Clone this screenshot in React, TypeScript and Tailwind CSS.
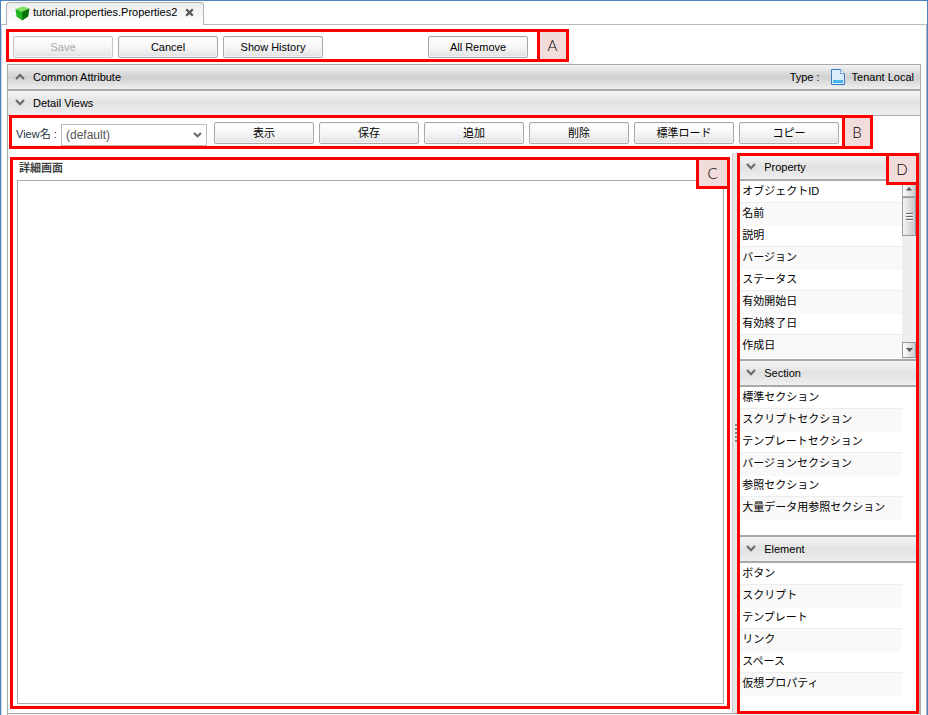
import React from "react";

const cjk = "font-['Liberation_Sans','Noto_Sans_CJK_JP',sans-serif]";

function Chevron({ up = false }: { up?: boolean }) {
  return (
    <svg width="10" height="8" viewBox="0 0 10 8" className="shrink-0" fill="none">
      <path d={up ? "M1 6 L5 2 L9 6" : "M1 1 L5 5.2 L9 1"} stroke="#6a6a6a" strokeWidth="2.2" />
    </svg>
  );
}

function Button({ label, disabled = false }: { label: string; disabled?: boolean }) {
  return (
    <button
      className={`h-[22px] w-[100px] shrink-0 rounded-[2px] border bg-linear-to-b from-white via-[#f6f6f6] to-[#e2e2e2] text-center text-[11px] leading-[20px] shadow-[inset_0_0_0_1px_#f4f4f4] ${
        disabled ? "border-[#c4c4c4] text-[#aaa]" : "border-[#a9a9a9] text-black"
      }`}
    >
      {label}
    </button>
  );
}

function Marker({ frame, tag, letter }: { frame: string; tag: string; letter: string }) {
  return (
    <div className={`pointer-events-none absolute border-3 border-[#f00] ${frame}`}>
      <div
        className={`absolute -top-[3px] -right-[3px] flex items-center justify-center border-3 border-[#f00] bg-[#f2dcdb] pr-px font-['Lato','Liberation_Sans',sans-serif] text-[15px] font-light text-black ${tag}`}
      >
        {letter}
      </div>
    </div>
  );
}

function List({ items }: { items: string[] }) {
  return (
    <ul className="w-[162px] shrink-0 pt-px">
      {items.map((item, i) => (
        <li
          key={item}
          className={`pl-[2px] text-[11px] whitespace-nowrap ${
            i % 2 ? "h-[24px] border-t border-[#ededed] bg-[#f9f9f9] leading-[21px]" : "h-[20px] leading-[18px]"
          }`}
        >
          {item}
        </li>
      ))}
    </ul>
  );
}

function SideHeader({ title }: { title: string }) {
  return (
    <div className="flex h-[26px] shrink-0 items-center gap-2 border-b-2 border-[#a9a9a9] bg-linear-to-b from-[#f5f5f5] via-[#e2e2e2] to-[#eee] pl-[6px] text-[11px]">
      <Chevron />
      <span>{title}</span>
    </div>
  );
}

function ScrollBar() {
  return (
    <div className="flex w-[14px] flex-col bg-[#eee]">
      <div className="flex h-[16px] items-center justify-center border border-[#aaa] bg-linear-to-r from-white to-[#ccc]">
        <svg width="6" height="4"><path d="M0 3.5 L3 0 L6 3.5Z" fill="#555" /></svg>
      </div>
      <div className="flex h-[39px] flex-col items-center justify-center gap-px border border-[#999] bg-linear-to-r from-[#f4f4f4] to-[#c8c8c8]">
        <i className="h-[2px] w-[7px] border-b border-white bg-[#666]" />
        <i className="h-[2px] w-[7px] border-b border-white bg-[#666]" />
        <i className="h-[2px] w-[7px] border-b border-white bg-[#666]" />
      </div>
      <div className="mt-auto mb-px flex h-[16px] items-center justify-center border border-[#999] bg-linear-to-r from-white to-[#ccc]">
        <svg width="7" height="4"><path d="M0 0 L3.5 4 L7 0Z" fill="#555" /></svg>
      </div>
    </div>
  );
}

function TabBar() {
  return (
    <div className="flex h-[24px] shrink-0 items-end">
      <div className="h-px w-[5px] bg-[#b9b9b9]" />
      <div className="z-10 flex h-[23px] w-[198px] items-start rounded-t-[4px] border border-b-0 border-[#b0b0b8] bg-linear-to-b from-[#eee] to-white pl-[8px]">
        <svg width="15" height="15" viewBox="0 0 15 15" className="mt-[3px]">
          <path d="M0.5 3 L8 0.5 L14.5 2.5 L7 5.8Z" fill="#7be05c" />
          <path d="M0.5 3 L7 5.8 L7.2 14.6 L1.5 10.5Z" fill="#23b423" />
          <path d="M14.5 2.5 L7 5.8 L7.2 14.6 L13.2 10.6Z" fill="#087408" />
        </svg>
        <span className="mt-px ml-[3px] text-[11px] leading-[16px]">tutorial.properties.Properties2</span>
        <svg width="9" height="9" viewBox="0 0 9 9" className="mt-[5px] ml-[8px]">
          <path d="M1.2 1.2 L7.8 7.8 M7.8 1.2 L1.2 7.8" stroke="#555" strokeWidth="2.3" />
        </svg>
      </div>
      <div className="h-px flex-1 bg-[#b9b9b9]" />
    </div>
  );
}

const propertyItems = ["オブジェクトID", "名前", "説明", "バージョン", "ステータス", "有効開始日", "有効終了日", "作成日"];
const sectionItems = [
  "標準セクション",
  "スクリプトセクション",
  "テンプレートセクション",
  "バージョンセクション",
  "参照セクション",
  "大量データ用参照セクション",
];
const elementItems = ["ボタン", "スクリプト", "テンプレート", "リンク", "スペース", "仮想プロパティ"];

export default function App() {
  return (
    <div
      className={`relative flex h-[715px] w-[928px] flex-col overflow-hidden border border-b-0 border-[#4f81bd] bg-white text-black ${cjk}`}
    >
      <TabBar />
      <div className="flex min-h-0 flex-1 flex-col border-r border-l border-r-[#b5b5b5] border-l-[#c9d6e8] pr-[5px] pl-[5px]">
        <div className="flex h-[39px] shrink-0 gap-[5px] pt-[11px] pl-[6px]">
          <Button label="Save" disabled />
          <Button label="Cancel" />
          <Button label="Show History" />
          <div className="w-[95px]" />
          <Button label="All Remove" />
        </div>

        <div className="flex min-h-0 flex-1 flex-col border border-b-0 border-[#aaa]">
          <div className="flex h-[26px] shrink-0 items-center border-b-2 border-[#a9a9a9] bg-linear-to-b from-[#f5f5f5] via-[#d0d0d0] to-[#efefef] pr-[6px] pl-[7px] text-[11px]">
            <Chevron up />
            <span className="ml-[8px]">Common Attribute</span>
            <span className="ml-auto">Type :</span>
            <svg width="14" height="16" viewBox="0 0 14 16" className="mr-[7px] ml-[11px]">
              <path d="M0.5 0.5 H9.5 L13.5 4.5 V15.5 H0.5Z" fill="#d9ecfb" stroke="#3c78c3" />
              <path d="M9.5 0.5 V4.5 H13.5" fill="#fff" stroke="#6d9dd6" />
              <path d="M2 11 H12 V14 H2Z" fill="#45b6ee" />
            </svg>
            <span>Tenant Local</span>
          </div>
          <div className="flex h-[25px] shrink-0 items-center gap-2 border-b border-[#aaa] bg-linear-to-b from-[#f5f5f5] via-[#e2e2e2] to-[#efefef] pl-[7px] text-[11px]">
            <Chevron />
            <span>Detail Views</span>
          </div>

          <div className="flex h-[37px] shrink-0 items-start pt-[6px] pl-[8px]">
            <span className="mt-[4px] w-[45px] text-[11px] leading-[16px] whitespace-nowrap text-[#234]">View名 :</span>
            <div className="mt-[2px] flex h-[22px] w-[146px] items-center justify-between border border-[#bbb] pr-[4px] pl-[4px] text-[12px] text-[#555]">
              <span>(default)</span>
              <svg width="9" height="6" viewBox="0 0 9 6">
                <path d="M1 1 L4.5 4.3 L8 1" fill="none" stroke="#666" strokeWidth="2" />
              </svg>
            </div>
            <div className="ml-[7px] flex gap-[5px]">
              <Button label="表示" />
              <Button label="保存" />
              <Button label="追加" />
              <Button label="削除" />
              <Button label="標準ロード" />
              <Button label="コピー" />
            </div>
          </div>

          <div className="flex h-[560px] shrink-0">
            <div className="flex w-[725px] flex-col pl-[9px]">
              <div className="h-[27px] pt-[6px] pl-[2px] text-[11px] leading-[18px] font-bold text-[#444]">詳細画面</div>
              <div className="h-[524px] w-[707px] border border-[#aaa]" />
            </div>
            <div className="flex w-[7px] items-center border-l border-[#ccc] bg-[#e8e8e8] pl-[2px]">
              <div className="flex flex-col gap-[2px]">
                {[0, 1, 2, 3, 4].map((n) => (
                  <i key={n} className="block h-[2px] w-[2px] bg-[#888]" />
                ))}
              </div>
            </div>
            <div className="flex w-[179px] flex-col pl-px">
              <div className="flex h-[208px] shrink-0 flex-col border-b-2 border-[#a9a9a9]">
                <div className="flex h-[28px] shrink-0 flex-col pt-[2px]">
                  <SideHeader title="Property" />
                </div>
                <div className="flex min-h-0 flex-1 overflow-hidden">
                  <List items={propertyItems} />
                  <ScrollBar />
                </div>
              </div>
              <div className="flex h-[176px] shrink-0 flex-col border-b-2 border-[#a9a9a9]">
                <SideHeader title="Section" />
                <List items={sectionItems} />
              </div>
              <SideHeader title="Element" />
              <List items={elementItems} />
            </div>
            <div className="w-[2px] bg-[#b0b0b0]" />
          </div>
          <div className="flex-1 border-t border-[#aaa] bg-[#eee]" />
        </div>
      </div>

      <Marker frame="left-[5px] top-[28px] h-[33px] w-[563px]" tag="h-[33px] w-[32px]" letter="A" />
      <Marker frame="left-[8px] top-[114px] h-[34px] w-[864px]" tag="h-[34px] w-[31px]" letter="B" />
      <Marker frame="left-[9px] top-[156px] h-[552px] w-[720px]" tag="h-[32px] w-[34px]" letter="C" />
      <Marker frame="left-[736px] top-[152px] h-[561px] w-[182px]" tag="h-[32px] w-[33px]" letter="D" />
    </div>
  );
}
